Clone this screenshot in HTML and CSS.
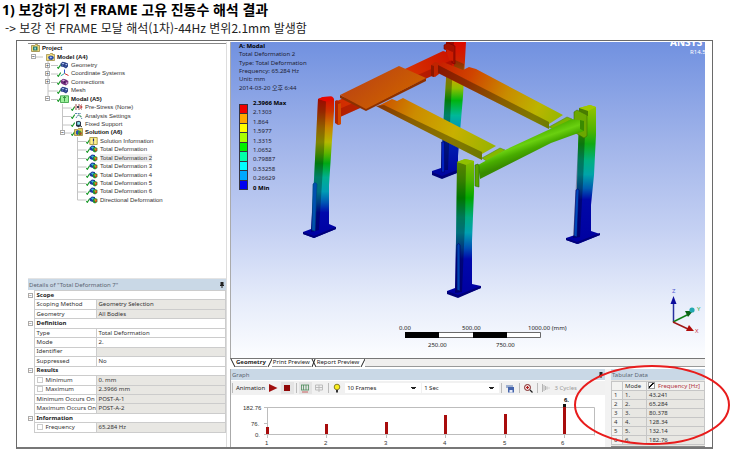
FILE: index.html
```html
<!DOCTYPE html>
<html lang="ko">
<head>
<meta charset="utf-8">
<title>FRAME 고유 진동수 해석 결과</title>
<link rel="stylesheet" href="styles.css">
</head>
<body>
<svg class="defs" aria-hidden="true">
  <defs>
    <symbol id="i-check" viewBox="0 0 4 5"><path d="M.3 3 1.3 4.4 3.7.6" fill="none" stroke="#1b9a2a" stroke-width="1.1"/></symbol>
    <symbol id="i-project" viewBox="0 0 9 8"><path d="M.5 1.5h3l1-1h2v1h2v6h-8z" fill="#f0d878" stroke="#8a7a30" stroke-width=".7"/><path d="M2 2.5h4.500v4H2z" fill="#2a7c6c"/><path d="M3.400 3.500h1.500v2H3.400z" fill="#9fe0e8"/></symbol>
    <symbol id="i-model" viewBox="0 0 9 8"><path d="M.5 1.500h3l1-1h2v1h2v6h-8z" fill="#f3dc7c" stroke="#98853a" stroke-width=".7"/><path d="M2 4l2-1.500 3 .5 1 2-2 2-3-.5z" fill="#2d50a8"/><path d="M3.500 4l1.500-.5 1 1-1.300 1z" fill="#a7c0ff"/></symbol>
    <symbol id="i-cubes" viewBox="0 0 9 8"><path d="M.5 2.500 2.500.7 5 1.300 8 2.500v3L6 7.500 3.500 6 .8 5.500z" fill="#2b4288"/><path d="M1.500 2.800 3 1.700l1.500.6-1.300 1.200zM5 3.800l1.500-1 1 .6-1.300 1.200z" fill="#b5c6f4"/><path d="M1.500 3.800l1.500.6v1zM5 5l1 .6v1z" fill="#6d8ada"/></symbol>
    <symbol id="i-axes" viewBox="0 0 9 8"><path d="M4.500 4.500V.5" stroke="#3358c8"/><path d="M4.500 4.500 8.500 6.500" stroke="#d02a2a"/><path d="M4.500 4.500.8 6.800" stroke="#35aaa8"/></symbol>
    <symbol id="i-conn" viewBox="0 0 9 8"><path d="M.8 2.500 3 .7l3 .8 2.300 1.500v2.500L6 7.500 3 6.500.8 5z" fill="#76307e"/><path d="M2 2.500l1.500-1 1.500 1-1.500 1zM5.500 5l1.500-1 .7 1-1 1.500z" fill="#d7a8dd"/><circle cx="4.500" cy="4.300" r="1" fill="#3c1958"/></symbol>
    <symbol id="i-modal" viewBox="0 0 9 8"><path d="M.5.800h8v6.700h-8z" fill="#9df09b" stroke="#2f9b3b" stroke-width=".8"/><path d="M4.500 1.500v5M3 3l1.500-1.500L6 3" fill="none" stroke="#1f7c2f" stroke-width=".8"/></symbol>
    <symbol id="i-pre" viewBox="0 0 9 8"><path d="M1 2h7M1 6h7" stroke="#9b5050" stroke-dasharray="2 1"/><path d="M.5 4h8M6 2.500 8 4 6 5.500" fill="none" stroke="#c03636" stroke-width=".9"/><path d="M3 3h2v2H3z" fill="#345"/></symbol>
    <symbol id="i-set" viewBox="0 0 9 8"><path d="M1 1.500h6M2 6 4 3l2 1 2 3" fill="none" stroke="#4a78a0" stroke-width=".9" stroke-dasharray="2 .7"/><path d="M5 2.500 7.500 5" stroke="#46a050"/></symbol>
    <symbol id="i-fix" viewBox="0 0 9 8"><path d="M2 1.500 5 .700 7 2v4L4.500 7.300 2 6z" fill="#28354a"/><path d="M3 2.500l2-.7 1 .7v2L3.500 5z" fill="#8ae0ee"/><path d="M6 5.500 8 7" stroke="#333"/></symbol>
    <symbol id="i-sol" viewBox="0 0 9 8"><path d="M.5 1.500h3l1-1h4v7h-8z" fill="#e3cb58" stroke="#8e7a2e" stroke-width=".7"/><path d="M2 3 4 2l1.500 1v2.500L3.500 7 2 6z" fill="#2a50b0"/><path d="M4 3.500 6 2.500 7.500 4v2.500l-2 .7L4 6z" fill="#2c9c36"/><path d="M5.500 4.500h2v2h-2z" fill="#c8381c"/></symbol>
    <symbol id="i-info" viewBox="0 0 9 8"><path d="M.8.500h7.400v7H.8z" fill="#fff18a" stroke="#9a8c30" stroke-width=".8"/><path d="M4.500 1.500v3M4.500 5.500v1" stroke="#1c2878" stroke-width="1.200"/></symbol>
    <symbol id="i-def" viewBox="0 0 9 8"><path d="M.6 2.500 3 .6l3 .4v3L3.500 6 1 5z" fill="#1d3f9e"/><path d="M2 2.500 3.500 1.500 5 2.500 4 4z" fill="#39bfd8"/><path d="M4 3.200 6 2 8.400 3v3L6 7.600 4 6.500z" fill="#238f2d"/><path d="M6 3.700l2-.5v2L6.300 6.800z" fill="#e04420"/><path d="M5 3.800l1.500-.5v2z" fill="#e5dc32"/></symbol>
    <linearGradient id="gL" gradientUnits="userSpaceOnUse" x1="0" y1="97" x2="0" y2="238">
      <stop offset="0" stop-color="#dc0800"/><stop offset=".1" stop-color="#cc3400"/><stop offset=".22" stop-color="#c88600"/><stop offset=".32" stop-color="#b4b800"/><stop offset=".4" stop-color="#5cb400"/><stop offset=".47" stop-color="#00a814"/><stop offset=".57" stop-color="#00b090"/><stop offset=".67" stop-color="#009cb4"/><stop offset=".75" stop-color="#0054b4"/><stop offset=".82" stop-color="#0008ac"/><stop offset="1" stop-color="#0000a0"/>
    </linearGradient>
    <linearGradient id="gB" gradientUnits="userSpaceOnUse" x1="0" y1="42" x2="0" y2="178">
      <stop offset="0" stop-color="#dc0800"/><stop offset=".15" stop-color="#cc2800"/><stop offset=".27" stop-color="#c8a800"/><stop offset=".34" stop-color="#90c000"/><stop offset=".43" stop-color="#00b410"/><stop offset=".54" stop-color="#00b898"/><stop offset=".64" stop-color="#0090b8"/><stop offset=".74" stop-color="#0020b0"/><stop offset="1" stop-color="#0000a0"/>
    </linearGradient>
    <linearGradient id="gR" gradientUnits="userSpaceOnUse" x1="0" y1="105" x2="0" y2="244">
      <stop offset="0" stop-color="#98c400"/><stop offset=".18" stop-color="#50b400"/><stop offset=".28" stop-color="#10aa14"/><stop offset=".4" stop-color="#00b080"/><stop offset=".5" stop-color="#00a4a8"/><stop offset=".6" stop-color="#005cb0"/><stop offset=".68" stop-color="#0008a8"/><stop offset="1" stop-color="#0000a0"/>
    </linearGradient>
    <linearGradient id="gF" gradientUnits="userSpaceOnUse" x1="0" y1="159" x2="0" y2="298">
      <stop offset="0" stop-color="#8cbc00"/><stop offset=".15" stop-color="#50b400"/><stop offset=".28" stop-color="#00a800"/><stop offset=".42" stop-color="#00ac80"/><stop offset=".53" stop-color="#00a0b0"/><stop offset=".64" stop-color="#0050b4"/><stop offset=".72" stop-color="#0008ac"/><stop offset="1" stop-color="#0000a0"/>
    </linearGradient>
    <linearGradient id="gB1" gradientUnits="userSpaceOnUse" x1="440" y1="64" x2="560" y2="122">
      <stop offset="0" stop-color="#c82000"/><stop offset=".25" stop-color="#d04400"/><stop offset=".55" stop-color="#c88c00"/><stop offset=".8" stop-color="#bcb400"/><stop offset="1" stop-color="#94b800"/>
    </linearGradient>
    <linearGradient id="gB2" gradientUnits="userSpaceOnUse" x1="380" y1="102" x2="492" y2="152">
      <stop offset="0" stop-color="#cc5000"/><stop offset=".3" stop-color="#cc8c00"/><stop offset=".65" stop-color="#c8b000"/><stop offset="1" stop-color="#98b400"/>
    </linearGradient>
    <linearGradient id="gBack" gradientUnits="userSpaceOnUse" x1="335" y1="110" x2="450" y2="55">
      <stop offset="0" stop-color="#d02c00"/><stop offset=".6" stop-color="#d83400"/><stop offset="1" stop-color="#cc1400"/>
    </linearGradient>
    <linearGradient id="gP" gradientUnits="userSpaceOnUse" x1="370" y1="76" x2="392" y2="104">
      <stop offset="0" stop-color="#bf4a0e"/><stop offset="1" stop-color="#cc5e00"/>
    </linearGradient>
    <linearGradient id="gG" gradientUnits="userSpaceOnUse" x1="525" y1="136" x2="532" y2="156">
      <stop offset="0" stop-color="#50b400"/><stop offset=".35" stop-color="#6ad010"/><stop offset=".65" stop-color="#48ac00"/><stop offset="1" stop-color="#388c00"/>
    </linearGradient>
  </defs>
</svg>

<header class="heading">
  <h1>1) 보강하기 전 FRAME 고유 진동수 해석 결과</h1>
  <p>-&gt; 보강 전 FRAME 모달 해석(1차)-44Hz 변위2.1mm 발생함</p>
</header>

<main class="shot">
  <div class="left">
    <section class="outline">
      <svg class="guides" viewBox="28 43 60 160" aria-hidden="true"><path d="M36 56h7M48 60v38M51 64.500h7M51 73h7M51 81.500h7M48 90h10M51 98.500h7M62.500 103v29M62.500 107h9M62.500 115.500h9M62.500 124h9M65 132h7M77.500 136v63M77.500 140.500h9M77.500 149h9M77.500 157.500h9M77.500 166h9M77.500 174h9M77.500 182.500h9M77.500 191h9M77.500 199h9"/></svg>
      <ul class="tree">
        <li class="l0 b"><svg class="ic"><use href="#i-project"/></svg>Project</li>
        <li class="l1 b"><button class="ex" aria-label="Collapse">−</button><svg class="ic"><use href="#i-model"/></svg>Model (A4)</li>
        <li class="l2"><button class="ex" aria-label="Expand">+</button><svg class="ck"><use href="#i-check"/></svg><svg class="ic"><use href="#i-cubes"/></svg>Geometry</li>
        <li class="l2"><button class="ex" aria-label="Expand">+</button><svg class="ck"><use href="#i-check"/></svg><svg class="ic"><use href="#i-axes"/></svg>Coordinate Systems</li>
        <li class="l2"><button class="ex" aria-label="Expand">+</button><svg class="ck"><use href="#i-check"/></svg><svg class="ic"><use href="#i-conn"/></svg>Connections</li>
        <li class="l2"><svg class="ck"><use href="#i-check"/></svg><svg class="ic"><use href="#i-cubes"/></svg>Mesh</li>
        <li class="l2 b"><button class="ex" aria-label="Collapse">−</button><svg class="ck"><use href="#i-check"/></svg><svg class="ic"><use href="#i-modal"/></svg>Modal (A5)</li>
        <li class="l3"><svg class="ck"><use href="#i-check"/></svg><svg class="ic"><use href="#i-pre"/></svg>Pre-Stress (None)</li>
        <li class="l3"><svg class="ck"><use href="#i-check"/></svg><svg class="ic"><use href="#i-set"/></svg>Analysis Settings</li>
        <li class="l3"><svg class="ck"><use href="#i-check"/></svg><svg class="ic"><use href="#i-fix"/></svg>Fixed Support</li>
        <li class="l3 b"><button class="ex" aria-label="Collapse">−</button><svg class="ck"><use href="#i-check"/></svg><svg class="ic"><use href="#i-sol"/></svg>Solution (A6)</li>
        <li class="l4"><svg class="ck"><use href="#i-check"/></svg><svg class="ic"><use href="#i-info"/></svg>Solution Information</li>
        <li class="l4"><svg class="ck"><use href="#i-check"/></svg><svg class="ic"><use href="#i-def"/></svg>Total Deformation</li>
        <li class="l4"><svg class="ck"><use href="#i-check"/></svg><svg class="ic"><use href="#i-def"/></svg><span class="sel">Total Deformation 2</span></li>
        <li class="l4"><svg class="ck"><use href="#i-check"/></svg><svg class="ic"><use href="#i-def"/></svg>Total Deformation 3</li>
        <li class="l4"><svg class="ck"><use href="#i-check"/></svg><svg class="ic"><use href="#i-def"/></svg>Total Deformation 4</li>
        <li class="l4"><svg class="ck"><use href="#i-check"/></svg><svg class="ic"><use href="#i-def"/></svg>Total Deformation 5</li>
        <li class="l4"><svg class="ck"><use href="#i-check"/></svg><svg class="ic"><use href="#i-def"/></svg>Total Deformation 6</li>
        <li class="l4"><svg class="ck"><use href="#i-check"/></svg><svg class="ic"><use href="#i-def"/></svg>Directional Deformation</li>
      </ul>
    </section>
    <section class="details">
      <h2 class="bar"><span>Details of "Total Deformation 7"</span><svg class="pin" viewBox="0 0 4 6"><path d="M.5 0h3v3h.5v1H0V3h.5zM1.500 4h1v2h-1z"/></svg></h2>
      <table class="props">
        <colgroup><col class="k0"><col class="k1"><col></colgroup>
        <tbody>
          <tr class="grp"><td class="tg"><button class="ex" aria-label="Collapse">−</button></td><th colspan="2">Scope</th></tr>
          <tr><td class="tg"></td><th>Scoping Method</th><td class="ro">Geometry Selection</td></tr>
          <tr><td class="tg"></td><th>Geometry</th><td class="ro">All Bodies</td></tr>
          <tr class="grp"><td class="tg"><button class="ex" aria-label="Collapse">−</button></td><th colspan="2">Definition</th></tr>
          <tr><td class="tg"></td><th>Type</th><td>Total Deformation</td></tr>
          <tr><td class="tg"></td><th>Mode</th><td>2.</td></tr>
          <tr><td class="tg"></td><th>Identifier</th><td class="ro"></td></tr>
          <tr><td class="tg"></td><th>Suppressed</th><td>No</td></tr>
          <tr class="grp"><td class="tg"><button class="ex" aria-label="Collapse">−</button></td><th colspan="2">Results</th></tr>
          <tr><td class="tg"></td><th><label><input type="checkbox">Minimum</label></th><td class="ro">0. mm</td></tr>
          <tr><td class="tg"></td><th><label><input type="checkbox">Maximum</label></th><td class="ro">2.3966 mm</td></tr>
          <tr><td class="tg"></td><th>Minimum Occurs On</th><td class="ro">POST-A-1</td></tr>
          <tr><td class="tg"></td><th>Maximum Occurs On</th><td class="ro">POST-A-2</td></tr>
          <tr class="grp"><td class="tg"><button class="ex" aria-label="Collapse">−</button></td><th colspan="2">Information</th></tr>
          <tr><td class="tg"></td><th><label><input type="checkbox">Frequency</label></th><td class="ro">65.284 Hz</td></tr>
        </tbody>
      </table>
    </section>
  </div>

  <div class="right">
    <section class="view">
      <svg class="scene" viewBox="231 42 474 316" role="img" aria-label="Frame mode shape">
        <!-- rear post -->
        <path d="M446 42h20l-3 54-5 60v12l-1 5-15 5-10-4v-3l9-3 2-40 3-50z" fill="url(#gB)"/>
        <path d="M446 42h8l-3 60-3 68h-7l2-40 3-50z" fill="#000" opacity=".3"/>
        <path d="M455 60l9 4-1 18-14-6z" fill="#5a3000" opacity=".5"/>
        <path d="M432 172l10 4 15-6v3l-15 6-10-4z" fill="#000078"/>
        <path d="M441.500 142h3v30h-3z" fill="#0020c0" stroke="#000060" stroke-width=".5"/>
        <!-- rear cross beam -->
        <path d="M335 102 443 51l11 3v12L340 117z" fill="url(#gBack)"/>
        <path d="M337 110 452 60v7L340 117z" fill="#700000" opacity=".3"/>
        <path d="M444 45l4-2 7 3v18l-3-1V52l-8-3z" fill="#a41000" stroke="#700" stroke-width=".6"/>
        <path d="M446 49l7 3v9l-4-1z" fill="#d01c00"/>
        <path d="M431 65l4-3 4 1v11l-4 3-4-1z" fill="#c02400"/><path d="M431 65l3 1v11l-3-1z" fill="#8e1800"/>
        <!-- upper rail -->
        <path d="M438 65l5-3 20 8 6-3 7 2 87 46-14 9z" fill="url(#gB1)"/>
        <path d="M438 65 549 122v7L438 73z" fill="url(#gB1)"/><path d="M438 65 549 122v7L438 73z" fill="#000" opacity=".32"/>
        <!-- lower rail -->
        <path d="M378 106l14-7 5 2 6-3 93 48-14 8z" fill="url(#gB2)"/>
        <path d="M376 106l8-1 98 47v8z" fill="url(#gB2)"/><path d="M376 106l8-1 98 47v8z" fill="#000" opacity=".32"/>
        <!-- plate -->
        <path d="M340 95 366 108l60-30v3l-60 30-26-13z" fill="#8c3000"/>
        <path d="M340 95 399 66l27 12-60 31z" fill="url(#gP)"/>
        <!-- left post -->
        <path d="M318 99l5-2 8-.5 3 2.500v12l-2 29-3 45v39l7 3v2l-22 9-11-4v-2l8-3 3-50z" fill="url(#gL)"/>
        <path d="M318 99l8 2-2 50-5 79-8 2 3-52z" fill="#000" opacity=".28"/>
        <path d="M318 99l5-2 9-.5 2 2-8 3z" fill="#e80800"/>
        <path d="M303 232l11 4 22-9v2l-22 9-11-4z" fill="#000078"/>
        <path d="M312 230l1-46q2-3 4 0l-2 47z" fill="#0050b0" stroke="#004878" stroke-width=".6"/>
        <path d="M335 101l2-1 4 3v21l-3 1-3-2z" fill="#b42400"/><path d="M338 104l3-1v21l-3 1z" fill="#d04800"/>
        <!-- right post -->
        <path d="M579 108l11-3 6 2v28l-2 40-3 30v26l9 3v1l-22 9-12-4v-2l9-3 2-50z" fill="url(#gR)"/>
        <path d="M579 130l6 3-2 50-3 54-7 1 3-55z" fill="#000" opacity=".3"/>
        <path d="M566 238l11 4 23-9v2l-23 9-11-4z" fill="#000078"/>
        <path d="M574 236l2-46q2-2 3 0l-2 47z" fill="#0048b8" stroke="#000068" stroke-width=".6"/>
        <path d="M579 108l11-3 6 2-8 4z" fill="#a0c800"/>
        <path d="M579 108l9 3v5l-9-3z" fill="#4a7c00"/>
        <path d="M574 112l3-2 10 5v21l-3 2-10-6z" fill="#6ca800" stroke="#3c7000" stroke-width=".6"/>
        <!-- front beam -->
        <path d="M482 158l18-10 5 2-17 12z" fill="#84b800" stroke="#4c8400" stroke-width=".5"/>
        <path d="M549 127l18-10 5 2-17 11z" fill="#7cb400" stroke="#4c8400" stroke-width=".5"/>
        <path d="M478 165 505 150 572 119l12 2v10l-33 12-71 36z" fill="url(#gG)"/>
        <path d="M584 121v10l-4-2v-9z" fill="#3a8a00"/>
        <!-- front post -->
        <path d="M457 162l8-3 9 2v30l-2 50v43l9 2v2l-23 9-11-4v-2l8-3 1-50z" fill="url(#gF)"/>
        <path d="M457 162l9 1-1 60-3 69-7 1 1-50z" fill="#000" opacity=".3"/>
        <path d="M457 162l8-3 9 2-8 4z" fill="#90c000"/>
        <path d="M447 291l11 4 23-9v2l-23 10-11-4z" fill="#000078"/>
        <path d="M457 290v-45q2-3 3 0v46z" fill="#0044b0" stroke="#000068" stroke-width=".6"/>
        <path d="M475 165l3-1 1 2v21l-4-1z" fill="#58a400" stroke="#2c6c00" stroke-width=".6"/>
        <!-- ruler -->
        <path d="M405.500 332.500h135v5h-135z" fill="#fff" stroke="#444" stroke-width=".8"/>
        <path d="M405 332h34v6h-34zM473 332h34v6h-34z" fill="#000"/>
        <g class="scale">
          <text x="399" y="330">0.00</text><text x="462" y="330">500.00</text><text x="528" y="330">1000.00 (mm)</text>
          <text x="428" y="347">250.00</text><text x="496" y="347">750.00</text>
        </g>
        <!-- triad -->
        <path d="M673.500 322v-18" stroke="#2830a0" stroke-width="1.500"/><path d="M673.500 296l3 8h-6z" fill="#0c0c9c"/>
        <path d="M673 322l16-8" stroke="#108018" stroke-width="1.500"/><path d="M693 311l-5 6-3-6z" fill="#0a6414"/><circle cx="692" cy="310" r="2.600" fill="#22a8b0"/>
        <path d="M673 322l15 7" stroke="#a01818" stroke-width="1.500"/><path d="M694 331l-5-6-3 6z" fill="#b00c0c"/>
        <g class="axis"><text x="672" y="293" fill="#5058d0">Z</text><text x="697" y="311" fill="#30a840">Y</text><text x="695" y="333" fill="#c83848">X</text></g>
      </svg>
      <div class="notes">
        <div class="meta"><b>A: Modal</b><span>Total Deformation 2</span><span>Type: Total Deformation</span><span>Frequency: 65.284 Hz</span><span>Unit: mm</span><span>2014-03-20 오후 6:44</span></div>
        <div class="legend">
          <div class="ramp"><i class="c1"></i><i class="c2"></i><i class="c3"></i><i class="c4"></i><i class="c5"></i><i class="c6"></i><i class="c7"></i><i class="c8"></i><i class="c9"></i></div>
          <div class="vals"><b>2.3966 Max</b><span>2.1303</span><span>1.864</span><span>1.5977</span><span>1.3315</span><span>1.0652</span><span>0.79887</span><span>0.53258</span><span>0.26629</span><b>0 Min</b></div>
        </div>
      </div>
      <div class="brand"><b>ANSYS</b><span>R14.5</span></div>
    </section>

    <nav class="tabs">
      <svg class="sl" viewBox="0 0 5 8"><path d="M1 0l4 8"/></svg><button class="on">Geometry</button><svg class="sl" viewBox="0 0 5 8"><path d="M1 8 5 0"/></svg><button>Print Preview</button><svg class="sl" viewBox="0 0 5 8"><path d="M1 8 4 0M1 0l4 8"/></svg><button>Report Preview</button><svg class="sl" viewBox="0 0 5 8"><path d="M1 8 5 0"/></svg>
    </nav>

    <div class="lower">
      <section class="graph">
        <h2 class="bar"><span>Graph</span><svg class="pin" viewBox="0 0 4 6"><path d="M.5 0h3v3h.5v1H0V3h.5zM1.500 4h1v2h-1z"/></svg></h2>
        <div class="tools">
          <i class="sep"></i><span class="an">Animation</span>
          <button aria-label="Play"><svg viewBox="0 0 10 10"><path d="M1 1l8.500 4L1 9z" fill="#a01010"/></svg></button>
          <button class="press" aria-label="Stop"><svg viewBox="0 0 10 10"><path d="M2 2h6v6H2z" fill="#900808"/></svg></button>
          <i class="sep"></i>
          <button class="press" aria-label="Distributed"><svg viewBox="0 0 10 10"><path d="M1 2h8M1 7h8M1.500 2v5M3.500 2v5M6 2v5M8.500 2v5" stroke="#4c8c5c" stroke-width=".8" fill="none"/><path d="M2 9h6" stroke="#c04040" stroke-width=".8"/></svg></button>
          <button aria-label="Result sets"><svg viewBox="0 0 10 10"><path d="M1.500 2h7v5h-7zM1.500 4.500h7M5 2v7" stroke="#b8b8b8" stroke-width=".9" fill="none"/></svg></button>
          <i class="sep"></i>
          <button aria-label="Hint"><svg viewBox="0 0 10 10"><circle cx="5" cy="4" r="2.800" fill="#fbee20" stroke="#6b6410" stroke-width=".8"/><path d="M4 7h2v2.500H4z" fill="#333"/></svg></button>
          <select class="w1" aria-label="Frames"><option>10 Frames</option></select>
          <select class="w2" aria-label="Duration"><option>1 Sec</option></select>
          <i class="sep"></i>
          <button aria-label="Export video"><svg viewBox="0 0 10 10"><path d="M1 2h7v3H1z" fill="#9fb0d0"/><path d="M3 4h6v5.500H3z" fill="#4464ac"/><path d="M4.500 7h3v2.500h-3z" fill="#e8ecf8"/></svg></button>
          <i class="sep"></i>
          <button aria-label="Zoom to fit"><svg viewBox="0 0 10 10"><circle cx="4.500" cy="4.500" r="3" fill="#f4dada" stroke="#802828"/><path d="M3 4.500h3M4.500 3v3" stroke="#b02020"/><path d="M7 7l2.500 2.500" stroke="#222" stroke-width="1.300"/></svg></button>
          <i class="sep"></i>
          <button aria-label="Cycles"><svg viewBox="0 0 10 10"><path d="M1.500 1v8M3 2v6M4.500 3v4M6 3.500v3M8 4.500v1" stroke="#b4b4b4"/></svg></button>
          <span class="dim">3 Cycles</span>
        </div>
        <svg class="chart" viewBox="231 396 374 52" role="img" aria-label="Frequency by mode">
          <path d="M264 408.500h330.500v28M264 424.500h3M264 435.500h330.500M267.500 408v31M326.500 436v3M386.500 436v3M445.500 436v3M505.500 436v3M564.500 436v3" fill="none" stroke="#bdbdbd"/>
          <path d="M266 428h3v7h-3zM325 425h3v10h-3zM385 423h3v12h-3zM444 416h3v19h-3zM504 415h3v20h-3zM563 408h3v27h-3z" fill="#a80c0c"/>
          <path d="M563 405h3v3h-3z" fill="#111"/>
          <text x="243" y="411">182.76</text><text x="251" y="427">76.</text><text x="255" y="438">0.</text>
          <text x="265" y="446">1</text><text x="324" y="446">2</text><text x="384" y="446">3</text><text x="443" y="446">4</text><text x="503" y="446">5</text><text x="561" y="446">6</text>
          <text class="hot" x="564" y="403">6.</text>
        </svg>
      </section>
      <section class="tab">
        <h2 class="bar"><span>Tabular Data</span></h2>
        <table class="data">
          <thead><tr><th></th><th>Mode</th><th class="fq"><label><input type="checkbox" checked>Frequency [Hz]</label></th></tr></thead>
          <tbody>
            <tr><th>1</th><td>1.</td><td>43.241</td></tr>
            <tr><th>2</th><td>2.</td><td>65.284</td></tr>
            <tr><th>3</th><td>3.</td><td>80.378</td></tr>
            <tr><th>4</th><td>4.</td><td>128.34</td></tr>
            <tr><th>5</th><td>5.</td><td>132.14</td></tr>
            <tr><th>6</th><td>6.</td><td>182.76</td></tr>
          </tbody>
        </table>
        <svg class="ring" viewBox="0 0 158 82" aria-hidden="true"><ellipse cx="79" cy="41" rx="77" ry="39"/></svg>
      </section>
    </div>
  </div>
</main>
</body>
</html>
```
FILE: styles.css
```css
* { box-sizing: border-box; }
body { margin: 0; background: #fff; color: #333; font: 6px/8px "Noto Sans", "Noto Sans CJK KR", sans-serif; }
h1, h2, p, ul { margin: 0; padding: 0; font-size: inherit; font-weight: normal; }
button, select, input { font: inherit; color: inherit; margin: 0; padding: 0; border: 0; border-radius: 0; background: none; appearance: none; }
i { font-style: normal; }
.defs { position: absolute; width: 0; height: 0; }

.heading { height: 40px; padding-left: 2px; color: #000; white-space: nowrap; }
.heading h1 { font-size: 14px; line-height: 20px; font-weight: bold; }
.heading p { padding-left: 3px; font-family: "Noto Sans CJK KR", sans-serif; font-size: 12px; line-height: 16px; color: #222; }

.shot { display: grid; grid-template-columns: 199px minmax(0, 1fr); column-gap: 3px; margin: 0 27px 0 16px; padding: 1px 7px 0 11px; border: 1px solid #6a6a6a; border-bottom: 2px solid #777; }

.left { display: flex; flex-direction: column; border-right: 1px solid #ddd; }
.outline { position: relative; height: 236px; margin-top: 1px; border-top: 1px solid #888; border-bottom: 1px solid #e4e4e4; }
.guides { position: absolute; left: 0; top: 0; width: 60px; height: 160px; }
.guides path { fill: none; stroke: #c4c4c4; }
.tree { position: relative; display: grid; grid-template-rows: repeat(19, 1fr); height: 160px; list-style: none; font-family: "Liberation Sans", sans-serif; color: #333; }
.tree li { display: flex; align-items: center; position: relative; white-space: nowrap; }
.tree .l0 { padding-left: 3px; }
.tree .l1 { padding-left: 18px; }
.tree .l2 { padding-left: 29px; }
.tree .l3 { padding-left: 43px; }
.tree .l4 { padding-left: 58px; }
.b { font-weight: bold; color: #111; }
.tree .ic { width: 9px; height: 8px; margin-right: 2px; }
.tree .ck { width: 4px; height: 5px; margin-top: 2px; margin-right: -1px; }
.sel { background: #ededed; }
.ex { width: 5px; height: 5px; border: 1px solid #aaa; background: #fff; font-size: 5px; line-height: 3px; color: #333; overflow: visible; display: block; }
.tree .ex { position: absolute; }
.l1 .ex { left: 3px; }
.l2 .ex { left: 17px; }
.l3 .ex { left: 32px; }

.bar { display: flex; align-items: center; justify-content: space-between; height: 11px; padding: 0 1px; background: #c9d8e6; color: #5b6672; white-space: nowrap; }
.pin { width: 4px; height: 6px; margin-right: 1px; fill: #222; }
.props { width: 100%; height: 143px; border-collapse: collapse; table-layout: fixed; line-height: 7px; }
.props td, .props th { padding: 0 0 0 2px; border: 1px solid #ccc; font-weight: normal; text-align: left; white-space: nowrap; }
.k0 { width: 6px; }
.k1 { width: 62px; }
.props .tg { padding: 0; border-width: 0 1px 0 0; }
.props .grp th { font-weight: bold; color: #222; }
.props .ro { background: #e8e7e3; }
.props input { width: 6px; height: 6px; margin-right: 3px; border: 1px solid #ccc; background: #fff; vertical-align: -1px; }

.right { min-width: 0; }
.view { position: relative; display: grid; overflow: hidden; border-left: 1px solid #aaa; background: linear-gradient(#7191e0, #a2b5ea 33%, #c5d1f3 60%, #e6ecfa 82%, #fcfdff); }
.scene, .notes { grid-area: 1 / 1; }
.scene { display: block; width: 100%; height: auto; }
.scale { font-size: 6px; fill: #222; }
.axis { font-size: 6px; }
.notes { padding-left: 8px; color: #1d2233; justify-self: start; }
.meta { display: grid; grid-template-rows: repeat(6, 1fr); height: 50px; line-height: 8px; }
.meta b { color: #000; }
.legend { display: flex; gap: 5px; margin-top: 7px; }
.ramp { display: flex; flex-direction: column; width: 9px; height: 86px; margin-top: 5px; border: 1px solid #334; border-bottom: 0; }
.ramp i { flex: 1; border-bottom: 1px solid #334; }
.c1 { background: #f00000; } .c2 { background: #ffa800; } .c3 { background: #ffff00; }
.c4 { background: #a8ff00; } .c5 { background: #00f000; } .c6 { background: #00ffa8; }
.c7 { background: #00ffff; } .c8 { background: #00a8ff; } .c9 { background: #0000f0; }
.vals { display: grid; grid-template-rows: repeat(10, 1fr); height: 94px; }
.vals b { color: #000; }
.brand { position: absolute; right: 0; top: -5px; width: 35px; overflow: hidden; color: #fff; white-space: nowrap; }
.brand b { display: block; font-size: 10px; line-height: 10px; }
.brand span { display: block; margin: 1px 0 0 20px; line-height: 8px; }

.tabs { display: flex; height: 9px; border-top: 1px solid #777; border-bottom: 1px solid #999; background: #f0efee; line-height: 7px; color: #222; }
.tabs button { padding: 0 1px; background: #fff; white-space: nowrap; }
.tabs .on { font-weight: bold; }
.sl { width: 5px; height: 8px; background: #fff; fill: none; stroke: #222; }

.lower { display: grid; grid-template-columns: minmax(0, 1fr) 94px; column-gap: 6px; margin-top: 2px; background: #f2f2f2; }
.graph { min-width: 0; background: #fff; border-left: 1px solid #aaa; }
.tools { display: flex; align-items: center; gap: 1px; height: 14px; margin-top: 1px; background: #f1f1f1; }
.tools button { width: 13px; height: 12px; padding: 1px; }
.tools svg { display: block; width: 10px; height: 10px; }
.press { background: #e4e4e4; }
.sep { width: 1px; height: 10px; margin: 0 1px; background: #bbb; }
.tools select { height: 10px; padding-left: 2px; color: #222; background: linear-gradient(#222, #222) no-repeat right 6px top 5px / 3px 1px, linear-gradient(#222, #222) no-repeat right 5px top 4px / 5px 1px, #fff; }
.w1 { width: 76px; }
.w2 { flex: 1; }
.an { margin: 0 1px; color: #222; }
.dim { color: #999; margin-right: 28px; }
.chart { display: block; width: 100%; height: auto; font: 6px "Liberation Sans", sans-serif; fill: #333; }
.hot { font-weight: bold; fill: #000; }

.tab { position: relative; background: #e8e7e3; border-bottom: 1px solid #888; }
.data { width: 100%; margin-top: 1px; border-collapse: collapse; table-layout: fixed; line-height: 8px; color: #333; }
.data th, .data td { height: 9px; padding: 0 0 0 2px; border: 1px solid #c6c6c6; text-align: left; font-weight: normal; white-space: nowrap; }
.data th:nth-child(1) { width: 11px; background: #f3f3f1; }
.data th:nth-child(2) { width: 24px; }
.data thead th { background: #f3f3f1; }
.data .fq { color: #b03040; padding-left: 1px; }
.data input { width: 7px; height: 7px; margin-right: 3px; border: 1px solid #999; vertical-align: -1px; background: linear-gradient(135deg, #fff 40%, #111 40% 60%, #fff 60%); }
.ring { position: absolute; left: -38px; top: -5px; width: 158px; height: 82px; fill: none; stroke: #e81c1c; stroke-width: 2; overflow: visible; }
```
